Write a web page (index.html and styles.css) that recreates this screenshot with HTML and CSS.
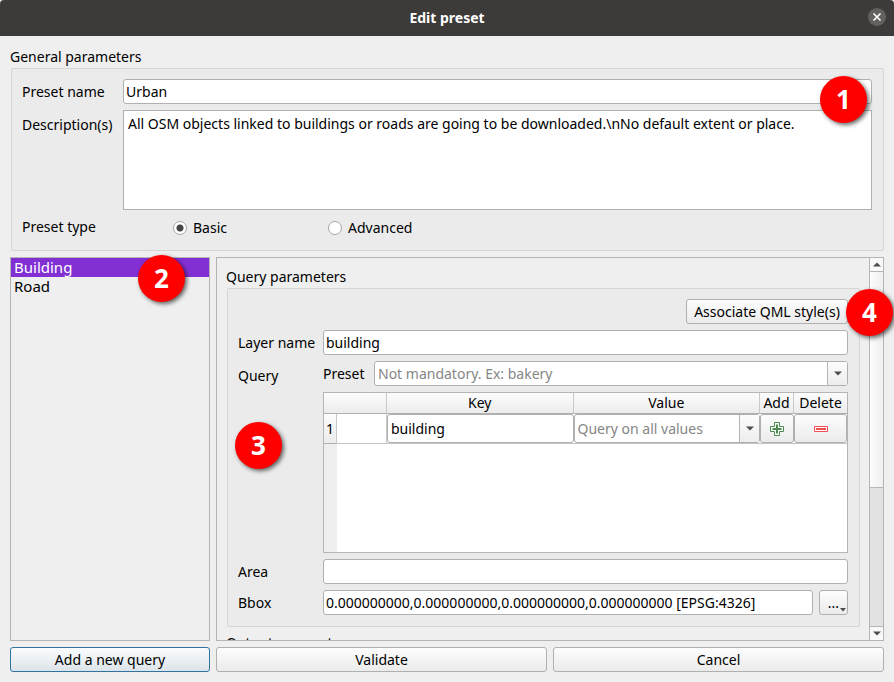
FILE: index.html
```html
<!DOCTYPE html>
<html lang="en">
<head>
<meta charset="utf-8">
<meta name="viewport" content="width=device-width, initial-scale=1">
<title>Edit preset</title>
<link rel="stylesheet" href="styles.css">
</head>
<body>
<header class="titlebar">
  <h1>Edit preset</h1>
  <button class="close" type="button" aria-label="Close">
    <svg viewBox="0 0 18 18" width="18" height="18"><circle cx="9" cy="9" r="9" fill="#636160"/><path d="M5.5 5.5l7 7M12.5 5.5l-7 7" stroke="#fff" stroke-width="1.7"/></svg>
  </button>
</header>
<main class="dialog">
  <section class="general">
    <h2>General parameters</h2>
    <div class="group form general-form">
      <label for="name">Preset name</label>
      <div class="anchor">
        <input class="field" id="name" type="text" value="Urban">
        <span class="badge badge-one">1</span>
      </div>
      <label class="top" for="desc">Description(s)</label>
      <textarea class="field area" id="desc">All OSM objects linked to buildings or roads are going to be downloaded.\nNo default extent or place.</textarea>
      <span id="type">Preset type</span>
      <div class="radios" role="radiogroup" aria-labelledby="type">
        <label><input type="radio" name="type" checked>Basic</label>
        <label><input type="radio" name="type">Advanced</label>
      </div>
    </div>
  </section>
  <div class="columns">
    <div class="queries">
      <ul>
        <li class="selected">Building</li>
        <li>Road</li>
      </ul>
      <span class="badge badge-two">2</span>
    </div>
    <div class="panel">
      <div class="viewport">
        <h2>Query parameters</h2>
        <div class="group form query-form">
          <button class="btn style-btn" type="button">Associate QML style(s)</button>
          <label for="layer">Layer name</label>
          <input class="field" id="layer" type="text" value="building">
          <div class="anchor query-label">Query<span class="badge badge-three">3</span></div>
          <div class="query">
            <div class="preset">
              <label for="preset">Preset</label>
              <div class="combo">
                <select class="field hint" id="preset"><option>Not mandatory. Ex: bakery</option></select>
                <span class="drop"><svg viewBox="0 0 8 5" width="8" height="5"><path d="M0 0.500h8L4 4.500z" fill="#4d4d4d"/></svg></span>
              </div>
            </div>
            <div class="grid">
              <table>
                <colgroup><col class="c-num"><col class="c-type"><col><col><col class="c-add"><col class="c-del"></colgroup>
                <thead><tr><th colspan="2"></th><th>Key</th><th>Value</th><th>Add</th><th>Delete</th></tr></thead>
                <tbody><tr>
                  <th scope="row">1</th>
                  <td></td>
                  <td><input class="field" type="text" value="building" aria-label="Key"></td>
                  <td><div class="combo">
                    <select class="field hint" aria-label="Value"><option>Query on all values</option></select>
                    <span class="drop"><svg viewBox="0 0 8 5" width="8" height="5"><path d="M0 0.500h8L4 4.500z" fill="#4d4d4d"/></svg></span>
                  </div></td>
                  <td><button class="btn" type="button" aria-label="Add"><svg viewBox="0 0 14 14" width="14" height="14"><path d="M4.500 .500h5v4h4v5h-4v4h-5v-4h-4v-5h4z" fill="#fff" stroke="#4c8a50"/><path d="M7 2.500v9M2.500 7h9" stroke="#4c8a50" stroke-width="2"/></svg></button></td>
                  <td><button class="btn" type="button" aria-label="Delete"><svg viewBox="0 0 14 6" width="14" height="6"><path d="M.5.5h13v5H.5z" fill="#fff" stroke="#ee5054"/><path d="M2 3h10" stroke="#ee5054" stroke-width="2"/></svg></button></td>
                </tr></tbody>
              </table>
            </div>
          </div>
          <label for="area">Area</label>
          <input class="field" id="area" type="text">
          <label for="bbox">Bbox</label>
          <div class="bbox">
            <input class="field" id="bbox" type="text" value="0.000000000,0.000000000,0.000000000,0.000000000 [EPSG:4326]">
            <button class="btn more" type="button">...<svg viewBox="0 0 6 4" width="6" height="4"><path d="M0 0h6L3 3.500z" fill="#4d4d4d"/></svg></button>
          </div>
        </div>
        <h2 class="next">Output parameters</h2>
      </div>
      <div class="scrollbar">
        <button type="button" aria-label="Scroll up"><svg viewBox="0 0 8 5" width="8" height="5"><path d="M0 4.500h8L4 .500z" fill="#4d4d4d"/></svg></button>
        <div class="track"><div class="thumb"></div></div>
        <button type="button" aria-label="Scroll down"><svg viewBox="0 0 8 5" width="8" height="5"><path d="M0 0.500h8L4 4.500z" fill="#4d4d4d"/></svg></button>
      </div>
      <span class="badge badge-four">4</span>
    </div>
  </div>
  <footer class="actions">
    <button class="btn primary" type="button">Add a new query</button>
    <button class="btn" type="button">Validate</button>
    <button class="btn" type="button">Cancel</button>
  </footer>
</main>
</body>
</html>
```
FILE: styles.css
```css
* { box-sizing: border-box; }
body {
  margin: 0;
  height: 100vh;
  display: flex;
  flex-direction: column;
  background: #efefef;
  color: #000;
  font: 14px/20px "Noto Sans", "Open Sans", sans-serif;
}
h1, h2 { margin: 0; font-size: 14px; }
h2 { font-weight: 400; line-height: 22px; }
button, input, select, textarea { font: inherit; color: inherit; margin: 0; }

.titlebar {
  height: 36px;
  flex: none;
  display: flex;
  align-items: center;
  justify-content: center;
  position: relative;
  background: #3d3b39;
  color: #fff;
  border-radius: 4px 4px 0 0;
}
.close {
  position: absolute;
  right: 8px;
  top: 8px;
  padding: 0;
  border: 0;
  background: none;
}
.close svg { display: block; }

.dialog {
  flex: 1;
  min-height: 0;
  display: flex;
  flex-direction: column;
  gap: 6px;
  padding: 10px;
}
.group {
  border: 1px solid #d5d5d5;
  border-radius: 2px;
  background: #ebebeb;
  margin-left: 1px;
  padding: 10px 11px 11px 10px;
}
.form {
  display: grid;
  gap: 6px;
  align-items: center;
}
.general-form { grid-template-columns: 95px 1fr; padding-bottom: 12px; }
.anchor { position: relative; }
.top { align-self: start; padding-top: 5px; }

.field {
  display: block;
  width: 100%;
  height: 25px;
  padding: 0 2px;
  border: 1px solid #b0b0b0;
  border-radius: 3px;
  background: #fff;
  outline: 0;
}
.area { height: 100px; padding: 3px 4px; border-radius: 0; resize: none; }
.hint { padding: 0 3px; color: #868686; appearance: none; }
.radios { display: flex; padding: 2px 0 0 50px; }
.radios label { width: 155px; display: flex; align-items: center; gap: 6px; }
.radios input {
  appearance: none;
  width: 14px;
  height: 14px;
  border: 1px solid #a6a6a6;
  border-radius: 50%;
  background: #fff;
}
.radios input:checked { background: radial-gradient(circle, #444 3px, #fff 4px); }

.columns {
  flex: 1;
  min-height: 0;
  display: grid;
  grid-template-columns: 200px 1fr;
  gap: 6px;
}
.queries { position: relative; border: 1px solid #b5b5b5; }
.queries ul { margin: 0; padding: 0; list-style: none; font-size: 15px; }
.queries li { line-height: 19px; padding: 0 3px; }
.queries .selected { background: #8230d4; color: #fff; }

.panel {
  position: relative;
  min-height: 0;
  display: flex;
  border: 1px solid #b5b5b5;
}
.viewport { flex: 1; min-width: 0; overflow: hidden; padding: 8px 9px; }
.query-form { grid-template-columns: 79px 1fr; }
.style-btn { grid-column: 2; justify-self: end; min-width: 162px; padding: 0 3px; }
.query-label { align-self: start; padding-top: 5px; }
.query { display: flex; flex-direction: column; gap: 6px; }
.preset, .bbox { display: flex; align-items: center; gap: 6px; }
.preset label { min-width: 45px; }
.combo { position: relative; flex: 1; }
.drop {
  position: absolute;
  inset: 1px 1px 1px auto;
  width: 20px;
  display: flex;
  align-items: center;
  justify-content: center;
  border-left: 1px solid #b5b5b5;
  background: linear-gradient(#fcfcfc, #ededed);
  pointer-events: none;
}

.grid {
  height: 161px;
  border: 1px solid #b5b5b5;
  background: linear-gradient(90deg, #efefef 13px, #fff 13px);
}
table { width: 100%; table-layout: fixed; border-collapse: separate; border-spacing: 0; }
.c-num { width: 13px; }
.c-type { width: 50px; }
.c-add { width: 34px; }
.c-del { width: 53px; }
th {
  height: 21px;
  padding: 0;
  font-weight: 400;
  background: linear-gradient(#fcfcfc, #ececec);
  border-right: 1px solid #c9c9c9;
  border-bottom: 1px solid #b0b0b0;
}
thead th:last-child { border-right: 0; }
td {
  height: 30px;
  padding: 0;
  background: #fff;
  border-bottom: 1px solid #c4c4c4;
}
td:nth-child(2) { border-right: 1px solid #c9c9c9; }
td .field, td .btn { height: 29px; }
td .btn { width: 100%; padding: 0; }
td .field { padding: 0 3px; }

.btn {
  display: flex;
  align-items: center;
  justify-content: center;
  height: 25px;
  border: 1px solid #b0b0b0;
  border-radius: 3px;
  background: linear-gradient(#fdfdfd, #ebebeb);
}
.more { position: relative; flex: none; width: 29px; padding: 0; }
.more svg { position: absolute; right: 1px; bottom: 2px; }
.next { margin-top: 5px; }

.scrollbar {
  width: 14px;
  display: flex;
  flex-direction: column;
  border-left: 1px solid #b5b5b5;
  background: #e2e2e2;
}
.scrollbar button {
  height: 13px;
  padding: 0;
  border: 0;
  display: flex;
  align-items: center;
  justify-content: center;
  background: #f9f9f9;
}
.track {
  flex: 1;
  border: solid #b5b5b5;
  border-width: 1px 0;
}
.thumb {
  height: 61%;
  border-bottom: 1px solid #b5b5b5;
  background: linear-gradient(90deg, #fcfcfc, #efefef);
}

.actions {
  display: grid;
  grid-template-columns: 200px 1fr 1fr;
  gap: 6px;
}
.primary { border-color: #3073a0; background: linear-gradient(#fafcfd, #dce4e9); }

.badge {
  position: absolute;
  z-index: 1;
  width: 47px;
  height: 47px;
  border-radius: 50%;
  background: #fe0000;
  color: #fff;
  font-size: 26px;
  font-weight: 700;
  line-height: 47px;
  text-align: center;
  box-shadow: 2px 2px 4px rgba(0, 0, 0, .6);
}
.badge-one { right: 5px; top: -3px; }
.badge-two { right: 24px; top: -3px; }
.badge-three { left: -3px; top: 61px; }
.badge-four { right: -10px; top: 31px; }
```
